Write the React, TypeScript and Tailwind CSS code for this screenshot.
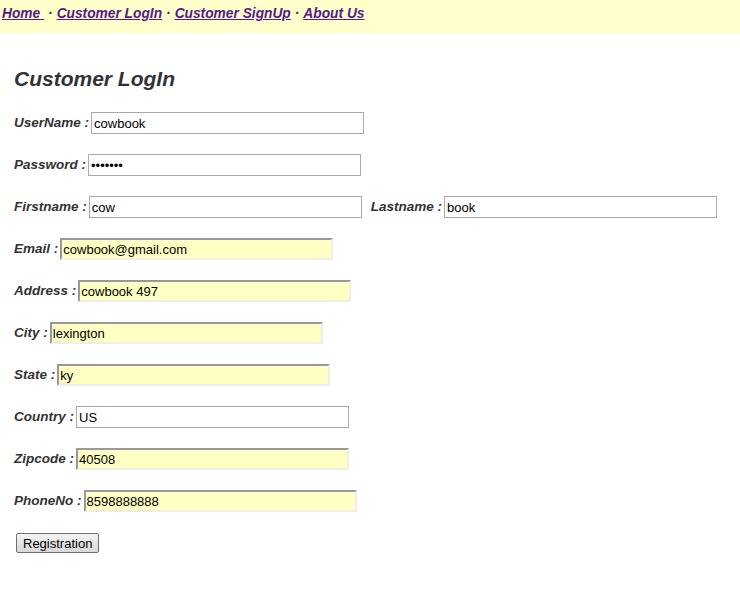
const NAV = ['Customer LogIn', 'Customer SignUp', 'About Us']

type Field = { label: string; value: string; hl?: boolean; type?: string }

const FIELDS: Field[][] = [
  [{ label: 'UserName', value: 'cowbook' }],
  [{ label: 'Password', value: 'cowbook', type: 'password' }],
  [
    { label: 'Firstname', value: 'cow' },
    { label: 'Lastname', value: 'book' },
  ],
  [{ label: 'Email', value: 'cowbook@gmail.com', hl: true }],
  [{ label: 'Address', value: 'cowbook 497', hl: true }],
  [{ label: 'City', value: 'lexington', hl: true }],
  [{ label: 'State', value: 'ky', hl: true }],
  [{ label: 'Country', value: 'US' }],
  [{ label: 'Zipcode', value: '40508', hl: true }],
  [{ label: 'PhoneNo', value: '8598888888', hl: true }],
]

function Input({ f }: { f: Field }) {
  return (
    <input
      type={f.type ?? 'text'}
      defaultValue={f.value}
      className={
        f.hl
          ? 'w-[273px] h-[22px] px-[1px] text-[13px] font-normal not-italic text-black bg-[#ffffc4] border-2 border-t-[#999] border-l-[#999] border-b-[#eee] border-r-[#eee] outline-none'
          : 'w-[273px] h-[22px] px-[2px] text-[13px] font-normal not-italic text-black bg-white border border-[#a9a9a9] outline-none'
      }
    />
  )
}

export default function App() {
  return (
    <div className="min-h-[589px] bg-white font-['Liberation_Sans',Arial,sans-serif]">
      <div className="h-[33px] bg-[#ffffcc] pl-[2px] pt-[5px] text-[13.75px] font-bold italic text-[#333] leading-[18px]">
        <a href="#" className="text-[#551a8b] underline">Home&nbsp;</a>
        {NAV.map(n => (
          <span key={n}>
            <span className="px-[4px]">·</span>
            <a href="#" className="text-[#551a8b] underline">{n}</a>
          </span>
        ))}
      </div>

      <div className="px-[14px] pt-[34px]">
        <h1 className="text-[21px] leading-[24px] font-bold italic text-[#333] mb-[11px]">Customer LogIn</h1>

        {FIELDS.map((row, i) => (
          <div key={i} className="h-[42px] flex items-center gap-[9px]">
            {row.map(f => (
              <label key={f.label} className="flex items-center gap-[2px] text-[13.5px] font-bold italic text-[#333]">
                <span>{f.label} :</span>
                <Input f={f} />
              </label>
            ))}
          </div>
        ))}

        <div className="h-[42px] flex items-center pl-[2px]">
          <button className="h-[20px] px-[6px] text-[13px] text-black bg-gradient-to-b from-[#f4f4f4] to-[#d8d8d8] border border-[#707070] rounded-[2px]">
            Registration
          </button>
        </div>
      </div>
    </div>
  )
}
